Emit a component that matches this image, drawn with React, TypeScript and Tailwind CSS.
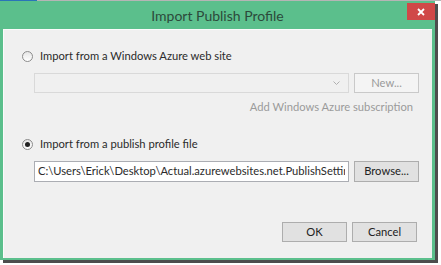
import React from 'react';

function Radio({ checked }: { checked?: boolean }) {
  return (
    <span className="w-[11px] h-[11px] rounded-full border border-[#8c8c8c] bg-gradient-to-b from-[#e6e6e6] to-white flex items-center justify-center shrink-0">
      {checked && <span className="w-[5px] h-[5px] rounded-full bg-[#222]" />}
    </span>
  );
}

function Button({ label, disabled, className = '' }: { label: string; disabled?: boolean; className?: string }) {
  return (
    <div
      className={`w-[65px] flex items-center justify-center border ${
        disabled ? 'border-[#c9c9c9] bg-[#f4f4f4] text-[#9a9a9a]' : 'border-[#adadad] bg-[#e1e1e1] text-[#222]'
      } ${className}`}
    >
      {label}
    </div>
  );
}

export default function App() {
  return (
    <div className="w-[441px] h-[265px] bg-white font-['Lato',sans-serif] overflow-hidden">
      {/* taskbar strip */}
      <div className="h-[1px] flex">
        <div className="w-[37px] bg-[#2a74b8]" />
        <div className="flex-1 bg-[#b5b5b5]" />
      </div>

      {/* window */}
      <div className="w-[435px] h-[259px] bg-[#5bbf8c] shadow-[3px_3px_0_#4d4d4d] flex flex-col">
        {/* title bar */}
        <div className="h-[28px] flex">
          <div className="w-[28px]" />
          <div className="flex-1 flex items-center justify-center text-[14px] text-[#2c4a3b]">Import Publish Profile</div>
          <div className="w-[28px] h-[17px] mt-[2px] bg-[#d04848] flex items-center justify-center">
            <svg width="8" height="8" viewBox="0 0 8 8">
              <path d="M1 1L7 7M7 1L1 7" stroke="#fff" strokeWidth="1.8" />
            </svg>
          </div>
        </div>

        {/* client area */}
        <div className="flex-1 mx-[3px] mb-[2px] bg-[#f0f0f0] border-t border-l border-[#fbfbfb] flex flex-col text-[11.2px] text-[#2b2b2b]">
          <div className="flex items-center gap-[7px] pl-[18px] mt-[19px] h-[14px]">
            <Radio />
            <span>Import from a Windows Azure web site</span>
          </div>

          <div className="flex gap-[5px] pl-[30px] mt-[10px] h-[20px]">
            <div className="w-[315px] border border-[#d9d9d9] bg-[#f0f0f0] flex items-center justify-end pr-[8px]">
              <svg width="7" height="5" viewBox="0 0 7 5">
                <path d="M0.5 0.5L3.5 3.5L6.5 0.5" stroke="#b0b0b0" fill="none" />
              </svg>
            </div>
            <Button label="New..." disabled />
          </div>

          <div className="flex justify-end pr-[19px] mt-[6px] h-[16px] items-center text-[#9b9b9b]">
            Add Windows Azure subscription
          </div>

          <div className="flex items-center gap-[7px] pl-[18px] mt-[22px] h-[14px]">
            <Radio checked />
            <span>Import from a publish profile file</span>
          </div>

          <div className="flex gap-[5px] pl-[30px] mt-[10px] h-[21px]">
            <div className="w-[315px] border border-[#abadb3] bg-white flex items-center px-[3px] overflow-hidden">
              <span className="whitespace-nowrap overflow-hidden">C:\Users\Erick\Desktop\Actual.azurewebsites.net.PublishSettings</span>
            </div>
            <Button label="Browse..." />
          </div>

          <div className="flex justify-end gap-[5px] pr-[15px] mt-[40px] h-[20px]">
            <Button label="OK" className="w-[64px]" />
            <Button label="Cancel" className="w-[64px]" />
          </div>
        </div>
      </div>
    </div>
  );
}
